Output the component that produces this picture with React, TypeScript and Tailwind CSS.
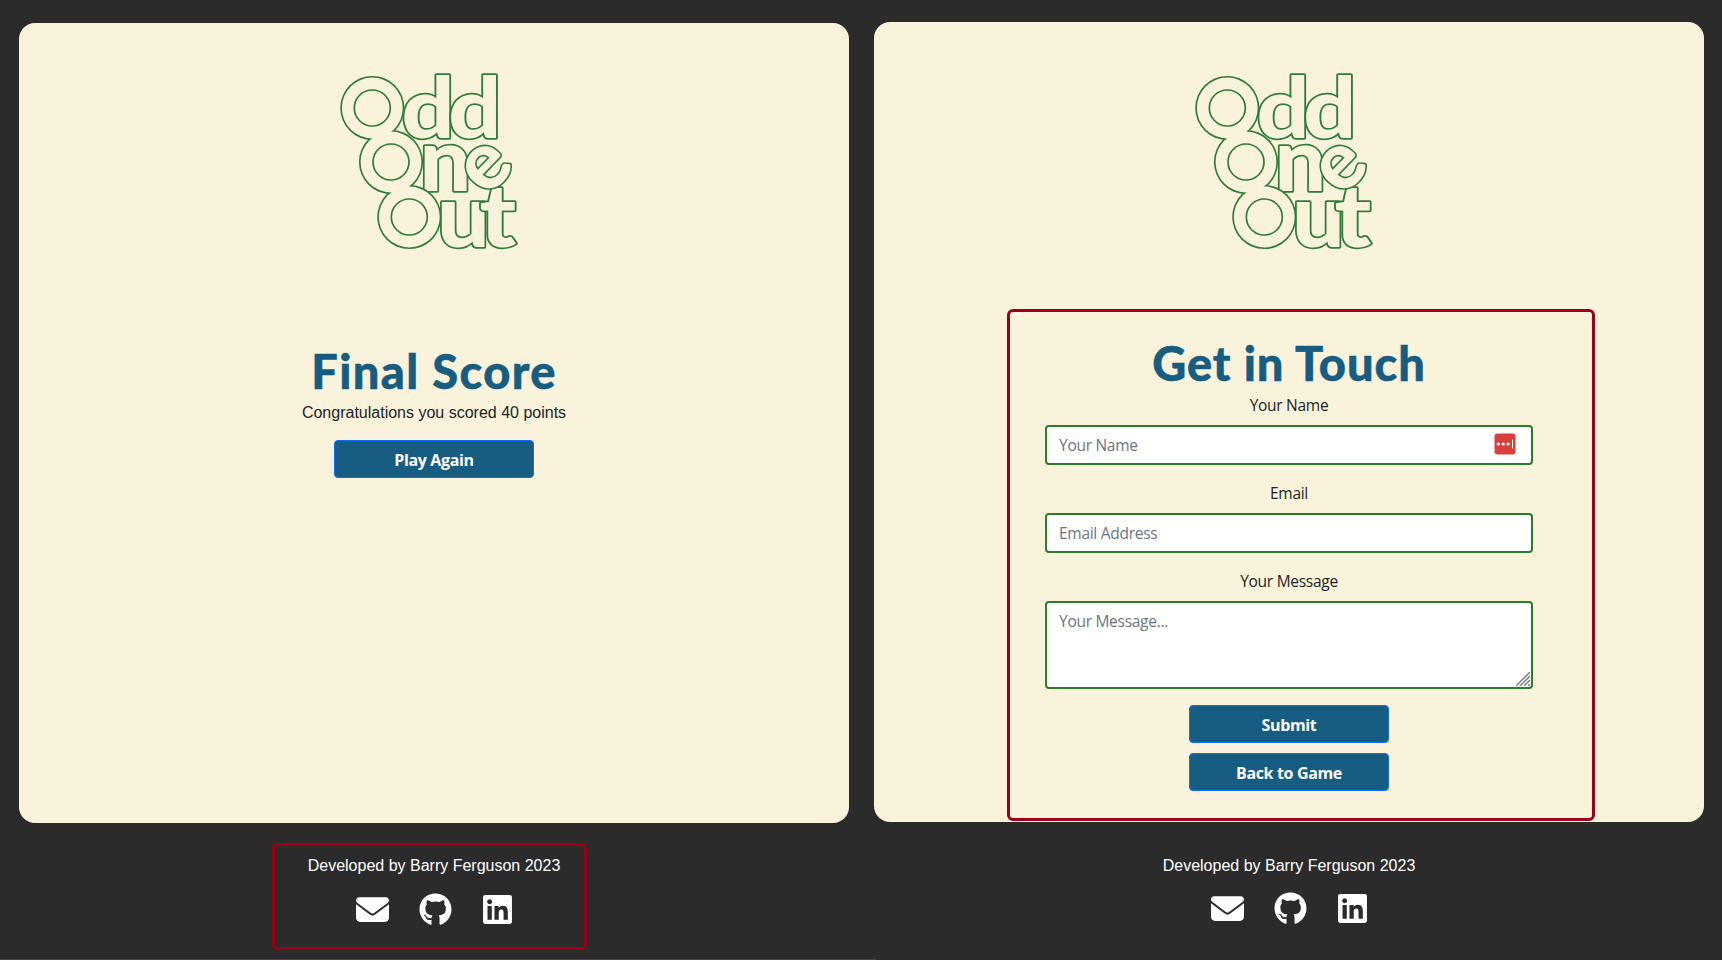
import { FaEnvelope, FaGithub, FaLinkedin } from "react-icons/fa6";

const rings = [
  { cx: 52.3, cy: 48 },
  { cx: 71, cy: 102 },
  { cx: 89.3, cy: 157 },
];

const glyphs = [
  { char: "d", size: 83, transform: "translate(81.5 78) scale(1.12 1)" },
  { char: "d", size: 83, transform: "translate(128.2 78) scale(1.12 1)" },
  { char: "n", size: 87, transform: "translate(99.5 131) scale(1.05 1)" },
  { char: "u", size: 87, transform: "translate(117 187) scale(1.07 1)" },
  { char: "t", size: 87, transform: "translate(159.5 187) scale(1.12 1)" },
  { char: "e", size: 84, transform: "translate(167.5 106.5) rotate(-46) scale(0.95 0.97) translate(-24 22)" },
];

function Logo() {
  return (
    <svg width="220" height="200" viewBox="0 0 220 200" className="block" role="img" aria-label="Odd One Out">
      <g
        className="fill-[#faf3db] stroke-[#2f7d3b]"
        strokeWidth="3.4"
        strokeLinejoin="round"
        paintOrder="stroke"
        fontFamily="Lato"
        fontWeight={900}
      >
        {glyphs.map((g, i) => (
          <text key={i} fontSize={g.size} transform={g.transform}>
            {g.char}
          </text>
        ))}
      </g>
      {rings.map((r, i) => (
        <circle key={i} {...r} r="32.1" className="fill-[#2f7d3b]" />
      ))}
      {rings.map((r, i) => (
        <circle key={i} {...r} r="30.4" className="fill-[#faf3db]" />
      ))}
      {rings.map((r, i) => (
        <circle key={i} {...r} r="18" fill="none" strokeWidth="1.7" className="stroke-[#2f7d3b]" />
      ))}
    </svg>
  );
}

function Button({ label }: { label: string }) {
  return (
    <button className="flex h-[38px] w-[200px] items-center justify-center rounded border border-[#0d6efd] bg-[#175d82] pt-px font-['Open_Sans',sans-serif] text-[16px] font-bold leading-6 tracking-[-0.35px] text-white">
      {label}
    </button>
  );
}

function Footer({ iconGap }: { iconGap: string }) {
  return (
    <footer className="flex flex-col items-center text-white">
      <p className="text-[16px] leading-6">Developed by Barry Ferguson 2023</p>
      <div className={`${iconGap} flex h-8 items-center pl-px`}>
        <FaEnvelope size={33} />
        <FaGithub size={33} className="ml-[30.5px]" />
        <FaLinkedin size={33} className="ml-[28.5px]" />
      </div>
    </footer>
  );
}

const headingClass =
  "h-[59px] whitespace-nowrap font-['Lato'] text-[47px] font-black leading-[58px] text-[#175d82] [-webkit-text-stroke:0.5px_#175d82]";
const labelClass =
  "block text-center font-['Open_Sans',sans-serif] text-[15.5px] leading-6 tracking-[-0.28px] text-[#212529]";
const fieldClass =
  "block w-full rounded border-2 border-[#2a7d2a] bg-white px-3 font-['Open_Sans',sans-serif] text-[15.5px] leading-6 tracking-[-0.28px] placeholder:text-[#6c757d]";

export default function App() {
  return (
    <div className="flex h-[960px] w-[1722px] flex-col overflow-hidden bg-[#2b2b2b] font-['Liberation_Sans',sans-serif]">
      <div className="flex h-[959px] gap-[25px] pl-[19px]">
        <div className="w-[830px] pt-[23px]">
          <main className="flex h-[800px] flex-col items-center rounded-2xl bg-[#faf3db] pt-[37px]">
            <div className="mr-[8px]">
              <Logo />
            </div>
            <h1 className={`${headingClass} mt-[82px] tracking-[1.4px]`}>Final Score</h1>
            <p className="text-[16px] leading-6 text-[#212529]">Congratulations you scored 40 points</p>
            <div className="mt-[15px]">
              <Button label="Play Again" />
            </div>
          </main>
          <section className="ml-[253px] mt-5 h-[107px] w-[315px] rounded-md border-3 border-[#9b0017] pl-[9px] pt-[8px]">
            <Footer iconGap="mt-[15px]" />
          </section>
        </div>
        <div className="w-[830px] pt-[22px]">
          <main className="flex h-[800px] flex-col items-center rounded-2xl bg-[#faf3db] pt-[38px]">
            <div className="mr-[8px]">
              <Logo />
            </div>
            <section className="ml-[24px] mt-[49px] flex h-[512px] w-[588px] flex-col items-center rounded-md border-3 border-[#9b0017] pr-[24px] pt-[22px]">
              <h1 className={`${headingClass} tracking-[0.95px]`}>Get in Touch</h1>
              <form className="flex w-[488px] flex-col">
                <label className={labelClass}>Your Name</label>
                <div className="relative mt-2">
                  <input className={`${fieldClass} h-10`} placeholder="Your Name" />
                  <svg className="absolute right-[17px] top-[8px]" width="22" height="22" viewBox="0 0 22 22">
                    <rect x="0.5" y="0.5" width="21" height="21" rx="3" fill="#d93f3b" />
                    <circle cx="4.3" cy="11" r="1.6" fill="#fff" />
                    <circle cx="9.2" cy="11" r="1.6" fill="#fff" />
                    <circle cx="14.1" cy="11" r="1.6" fill="#fff" />
                    <rect x="18" y="6.5" width="1" height="9" fill="#fff" />
                  </svg>
                </div>
                <label className={`${labelClass} mt-4`}>Email</label>
                <input className={`${fieldClass} mt-2 h-10`} placeholder="Email Address" />
                <label className={`${labelClass} mt-4`}>Your Message</label>
                <div className="relative mt-2">
                  <textarea className={`${fieldClass} h-[88px] resize-none py-1.5`} placeholder="Your Message..." />
                  <svg
                    className="absolute bottom-[3px] right-[3px]"
                    width="14"
                    height="14"
                    viewBox="0 0 14 14"
                    stroke="#777"
                    strokeWidth="1.3"
                    fill="none"
                  >
                    <path d="M0 14L14 0M4 14L14 4M8 14L14 8M12 14L14 12" />
                  </svg>
                </div>
                <div className="mt-4 flex flex-col items-center gap-2.5">
                  <Button label="Submit" />
                  <Button label="Back to Game" />
                </div>
              </form>
            </section>
          </main>
          <div className="pt-[32px]">
            <Footer iconGap="mt-[14px]" />
          </div>
        </div>
      </div>
      <div className="h-px w-[876px] bg-[#454343]" />
    </div>
  );
}
